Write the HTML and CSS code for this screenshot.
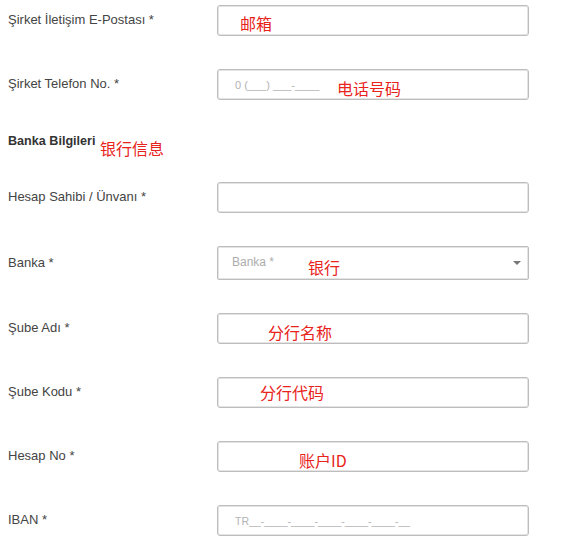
FILE: index.html
```html
<!DOCTYPE html>
<html>
<head>
<meta charset="utf-8">
<link rel="stylesheet" href="styles.css">
</head>
<body>
<div class="page">
  <form class="form">
    <div class="row">
      <label class="label">Şirket İletişim E-Postası *</label>
      <div class="field"><input class="input" type="text"></div>
    </div>
    <div class="row">
      <label class="label">Şirket Telefon No. *</label>
      <div class="field"><input class="input" type="text" placeholder="0 (___) ___-____"></div>
    </div>
    <div class="section">Banka Bilgileri</div>
    <div class="row">
      <label class="label">Hesap Sahibi / Ünvanı *</label>
      <div class="field"><input class="input" type="text"></div>
    </div>
    <div class="row row-select">
      <label class="label">Banka *</label>
      <div class="field">
        <div class="select"><span class="select-ph">Banka *</span><span class="caret"></span></div>
      </div>
    </div>
    <div class="row">
      <label class="label">Şube Adı *</label>
      <div class="field"><input class="input" type="text"></div>
    </div>
    <div class="row">
      <label class="label">Şube Kodu *</label>
      <div class="field"><input class="input" type="text"></div>
    </div>
    <div class="row">
      <label class="label">Hesap No *</label>
      <div class="field"><input class="input" type="text"></div>
    </div>
    <div class="row">
      <label class="label">IBAN *</label>
      <div class="field"><input class="input input-sm" type="text" placeholder="TR__-____-____-____-____-____-__"></div>
    </div>
  </form>

  <span class="note note-email">邮箱</span>
  <span class="note note-phone">电话号码</span>
  <span class="note note-bankinfo">银行信息</span>
  <span class="note note-bank">银行</span>
  <span class="note note-branch">分行名称</span>
  <span class="note note-code">分行代码</span>
  <span class="note note-account">账户ID</span>
</div>
</body>
</html>
```

FILE: styles.css
```css
* { box-sizing: border-box; }
html, body { margin: 0; padding: 0; background: #fff; }
body { font-family: "Liberation Sans", Arial, sans-serif; color: #333; }

.page { position: relative; width: 574px; height: 556px; overflow: hidden; }

.form { padding: 5px 0 0 8px; margin: 0; }

.row { display: flex; align-items: center; height: 31px; margin-bottom: 33px; }
.row-select { height: 34px; }

.label { width: 209px; font-size: 13px; color: #444; line-height: 15px; margin-top: -2px; }

.field { width: 312px; height: 100%; }

.input {
  display: block; width: 100%; height: 100%;
  border: 1px solid #bdbdbd; border-radius: 3px;
  box-shadow: inset 0 0 0 1px #e4e4e4;
  padding: 0 0 0 17px; font-family: "Liberation Sans", Arial, sans-serif;
  font-size: 11px; color: #333; background: #fff; outline: none;
}
.input::placeholder { color: #b3b3b3; }
.input-sm { font-size: 10.5px; }

.select {
  display: flex; align-items: center; justify-content: space-between;
  height: 100%; border: 1px solid #bdbdbd; border-radius: 2px;
  box-shadow: inset 0 0 0 1px #e4e4e4;
  padding: 0 7px 0 14px;
}
.select-ph { font-size: 12px; color: #adadad; margin-top: -2px; }
.caret {
  width: 0; height: 0;
  border-left: 4px solid transparent; border-right: 4px solid transparent;
  border-top: 4px solid #777;
  margin-top: -1px;
}

.section { font-size: 12.6px; font-weight: bold; color: #333; line-height: 16px; height: 16px; margin-bottom: 33px; }

.note {
  position: absolute; font-family: "Noto Sans CJK SC", "Liberation Sans", sans-serif;
  font-size: 16px; line-height: 16px; color: #e8231b; white-space: nowrap;
}
.note-email { left: 240px; top: 15px; }
.note-phone { left: 337px; top: 80px; }
.note-bankinfo { left: 100px; top: 140px; }
.note-bank { left: 308px; top: 259px; }
.note-branch { left: 268px; top: 324px; }
.note-code { left: 260px; top: 384px; }
.note-account { left: 299px; top: 452px; }
```
